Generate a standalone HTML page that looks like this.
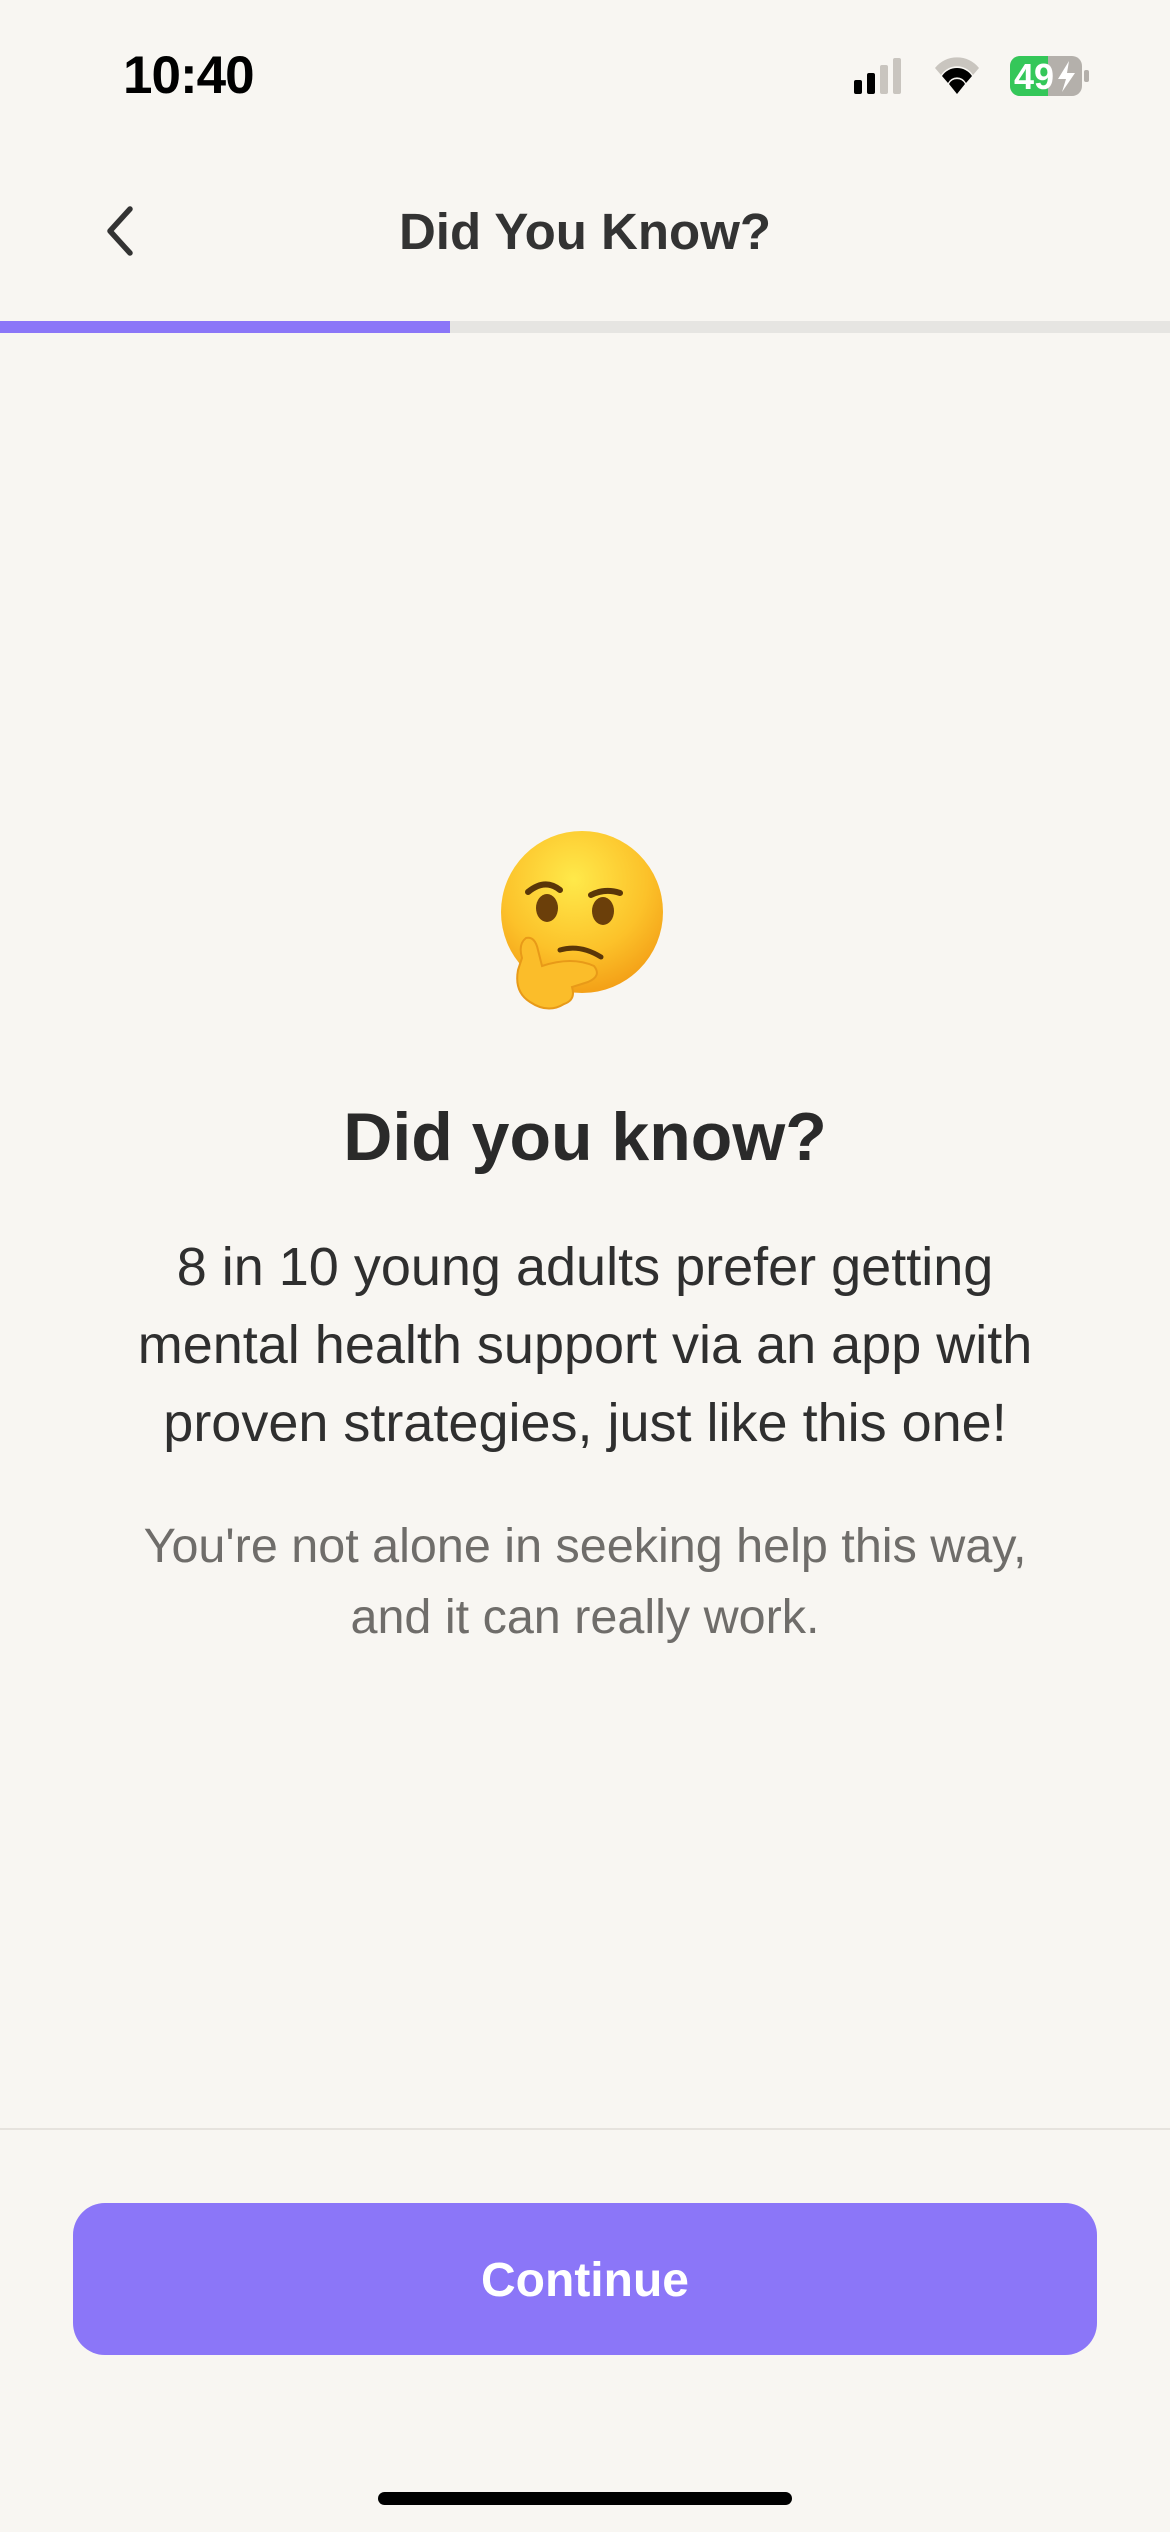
<!DOCTYPE html>
<html><head><meta charset="utf-8"><style>
html,body{margin:0;padding:0}
body{width:1170px;height:2532px;background:#f8f6f2;position:relative;overflow:hidden;font-family:"Liberation Sans",sans-serif}
.abs{position:absolute}
.c{left:0;width:1170px;text-align:center}
</style></head><body>
<div class="abs" style="left:123px;top:45px;font-size:53px;font-weight:700;color:#000;letter-spacing:-1px">10:40</div>
<svg class="abs" style="left:850px;top:56px" width="250" height="46" viewBox="0 0 250 46">
<rect x="4" y="24" width="8" height="14" rx="2" fill="#000"/>
<rect x="17" y="17" width="8" height="21" rx="2" fill="#000"/>
<rect x="30" y="9" width="8" height="29" rx="2" fill="#c9c5bf"/>
<rect x="43" y="2" width="8" height="36" rx="2" fill="#c9c5bf"/>
<g transform="translate(22,0)">
<path d="M63 12 A28 28 0 0 1 107 12 L101 19 A19 19 0 0 0 69 19 Z" fill="#c9c5bf"/>
<path d="M70 20 A18 18 0 0 1 100 20 L94 27 A10 10 0 0 0 76 27 Z" fill="#000"/>
<path d="M77 28 A9 9 0 0 1 93 28 L85 38 Z" fill="#000"/>
</g>
<rect x="160" y="0" width="72" height="40" rx="10" fill="#b4b0ab"/>
<path d="M170 0 H198 V40 H170 A10 10 0 0 1 160 30 V10 A10 10 0 0 1 170 0Z" fill="#34c759"/>
<rect x="234" y="14" width="5" height="12" rx="2" fill="#b4b0ab"/>
<text x="164" y="33" font-family="Liberation Sans" font-weight="700" font-size="36" fill="#fff">49</text>
<path d="M219 5 L208 23 H216 L212 36 L225 17 H217 Z" fill="#fff"/>
</svg>
<svg class="abs" style="left:100px;top:205px" width="40" height="52" viewBox="0 0 40 52"><path d="M30 4 L10 26 L30 48" stroke="#333" stroke-width="5.5" fill="none" stroke-linecap="round" stroke-linejoin="round"/></svg>
<div class="abs c" style="top:202px;font-size:51px;font-weight:700;color:#333">Did You Know?</div>
<div class="abs" style="left:0;top:321px;width:1170px;height:12px;background:#e6e5e2"></div>
<div class="abs" style="left:0;top:321px;width:450px;height:12px;background:#8b76f8"></div>
<svg class="abs" style="left:490px;top:820px" width="190" height="190" viewBox="0 0 190 190">
<defs><radialGradient id="g" cx="0.45" cy="0.3" r="0.75"><stop offset="0" stop-color="#ffe94a"/><stop offset="0.6" stop-color="#fcc22a"/><stop offset="1" stop-color="#f29a14"/></radialGradient></defs>
<circle cx="92" cy="92" r="81" fill="url(#g)"/>
<path d="M38 72 Q55 58 70 70" stroke="#5a3608" stroke-width="6" fill="none" stroke-linecap="round"/>
<path d="M101 75 Q115 68 130 73" stroke="#5a3608" stroke-width="6" fill="none" stroke-linecap="round"/>
<ellipse cx="57" cy="88" rx="11" ry="14" fill="#6b3f0a"/>
<ellipse cx="113" cy="91" rx="11" ry="14" fill="#6b3f0a"/>
<path d="M70 130 Q90 124 111 137" stroke="#5a3608" stroke-width="5" fill="none" stroke-linecap="round"/>
<path d="M40 182 Q24 172 28 150 L32 138 Q28 124 36 118 Q45 116 48 130 L52 146 Q82 136 104 146 Q112 156 98 162 L82 167 Q86 180 74 184 Q58 194 40 182Z" fill="#fbbd2a" stroke="#e89a18" stroke-width="2"/>
</svg>
<div class="abs c" style="top:1098px;font-size:68px;font-weight:700;color:#2a2a2a">Did you know?</div>
<div class="abs c" style="top:1228px;font-size:54px;line-height:78px;color:#2f2f2f">8 in 10 young adults prefer getting<br>mental health support via an app with<br>proven strategies, just like this one!</div>
<div class="abs c" style="top:1511px;font-size:48.5px;line-height:71px;color:#6f6d6a">You're not alone in seeking help this way,<br>and it can really work.</div>
<div class="abs" style="left:0;top:2128px;width:1170px;height:2px;background:#e6e3de"></div>
<div class="abs" style="left:73px;top:2203px;width:1024px;height:152px;border-radius:32px;background:#8b76f8;color:#fff;font-size:48px;font-weight:700;text-align:center;line-height:156px">Continue</div>
<div class="abs" style="left:378px;top:2492px;width:414px;height:13px;border-radius:7px;background:#000"></div>
</body></html>
